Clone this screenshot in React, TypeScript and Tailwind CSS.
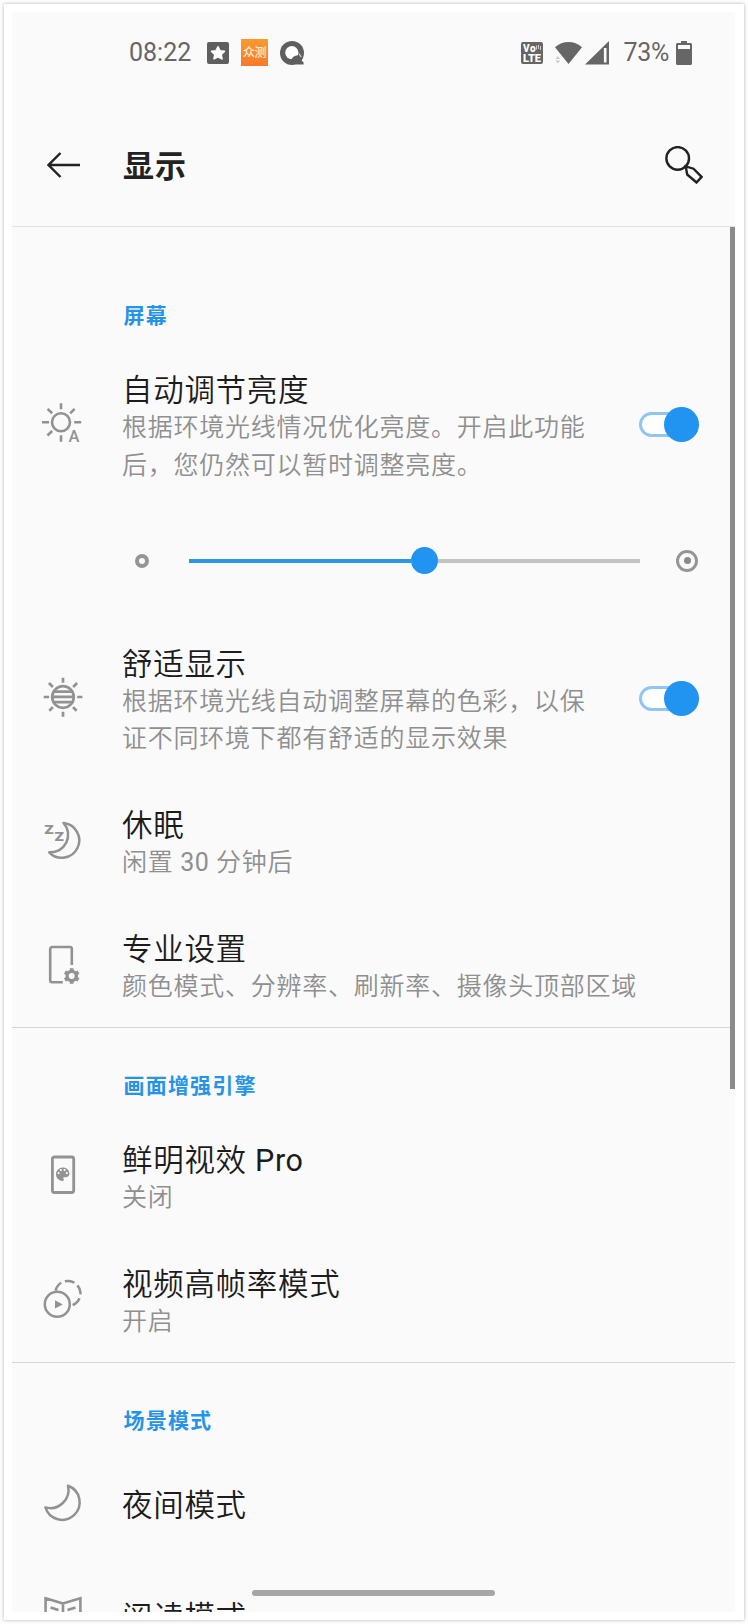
import type { ReactNode } from 'react'

const ICON = 'w-10 h-10 shrink-0 overflow-visible text-[#929292]'

function AutoBrightnessIcon() {
  return (
    <svg viewBox="0 0 40 40" className={ICON} fill="none" stroke="currentColor" strokeWidth="2.6">
      <circle cx="19" cy="17.3" r="9" />
      <path d="M19 -1.8v6M19 30.3v6.5M0 17.3h7M32.2 17.3h7M5.6 3.9l4.6 4.4M32.6 3.9l-4.4 4.4M5.4 30.5l4.8-4.5" />
      <text x="26.6" y="37.3" fontSize="16.5" fontWeight="500" fill="currentColor" stroke="none" fontFamily="Roboto">
        A
      </text>
    </svg>
  )
}

function ComfortIcon() {
  return (
    <svg viewBox="0 0 40 40" className={ICON} fill="none" stroke="currentColor" strokeWidth="2.7">
      <circle cx="21" cy="19" r="10.8" />
      <path d="M21 -.3v5M21 33.7v5M1.7 19h5.4M35.2 19h5.2M6.9 5.1l4 3.8M35.1 5.1l-4 3.8M7.3 32.7l3.6-3.6M34.6 32.700L31 29.100" />
      <path d="M11.5 13.7h19M10 18.9h22M11.5 24.1h19" />
    </svg>
  )
}

function SleepIcon() {
  return (
    <svg viewBox="0 0 40 40" className={ICON} fill="none" stroke="currentColor" strokeWidth="2.5" strokeLinejoin="round">
      <path d="M21.5 2A17.4 17.4 0 1 1 7.2 31.3A17.5 17.5 0 0 0 21.5 2z" />
      <g fill="currentColor" stroke="none" fontFamily="Roboto" fontWeight="900" fontSize="13">
        <text x="2.2" y="12.6" textLength="9.4" lengthAdjust="spacingAndGlyphs">Z</text>
        <text x="12.6" y="20" textLength="9.4" lengthAdjust="spacingAndGlyphs">Z</text>
      </g>
    </svg>
  )
}

function ProSettingsIcon() {
  return (
    <svg viewBox="0 0 40 40" className={ICON} fill="none" stroke="currentColor" strokeWidth="2.6">
      <path d="M29.8 20V4a2 2 0 0 0-2-2H10.2a2 2 0 0 0-2 2v31.2a2 2 0 0 0 2 2h10.6" />
      <circle cx="29.7" cy="31" r="4.6" strokeWidth="3.2" />
      <path
        d="M29.7 27V23.2M29.7 35v3.8M26.2 29l-3.3-1.9M33.2 33l3.3 1.9M26.2 33l-3.3 1.9M33.2 29l3.3-1.9"
        strokeWidth="3.8"
      />
    </svg>
  )
}

function ColorPhoneIcon() {
  return (
    <svg viewBox="0 0 40 40" className={ICON} fill="none" stroke="currentColor" strokeWidth="2.8">
      <rect x="10.4" y="1" width="21.3" height="35.5" rx="2" />
      <path
        transform="translate(11.7 9.2) scale(.75)"
        fill="currentColor"
        stroke="none"
        fillRule="evenodd"
        d="M12 3a9 9 0 0 0 0 18c.83 0 1.5-.67 1.5-1.5 0-.39-.15-.74-.39-1.01-.23-.26-.38-.61-.38-.99 0-.83.67-1.5 1.5-1.5H16c2.76 0 5-2.24 5-5 0-4.42-4.03-8-9-8zM6.5 12a1.5 1.5 0 1 1 0-3 1.5 1.5 0 0 1 0 3zm3-4a1.5 1.5 0 1 1 0-3 1.5 1.5 0 0 1 0 3zm5 0a1.5 1.5 0 1 1 0-3 1.5 1.5 0 0 1 0 3zm3 4a1.5 1.5 0 1 1 0-3 1.5 1.5 0 0 1 0 3z"
      />
    </svg>
  )
}

function VideoIcon() {
  return (
    <svg viewBox="0 0 40 40" className={ICON} fill="none" stroke="currentColor" strokeWidth="2.5">
      <circle cx="15.3" cy="24.2" r="12.5" />
      <path d="M13.6 10.6A12.6 12.6 0 1 1 29.4 25.6" strokeDasharray="9.8 4" />
      <path d="M13 20.2v8.4l7.8-4.2z" fill="currentColor" stroke="none" />
    </svg>
  )
}

function MoonIcon() {
  return (
    <svg viewBox="0 0 40 40" className={ICON} fill="none" stroke="currentColor" strokeWidth="2.5" strokeLinejoin="round">
      <path d="M26 .8A17.5 17.5 0 1 1 3.4 22.4A18.2 18.2 0 0 0 26 .8z" />
    </svg>
  )
}

function BookIcon() {
  return (
    <svg viewBox="0 0 40 40" className={ICON} fill="none" stroke="currentColor" strokeWidth="2.6">
      <path d="M21 6.5L3.6 1.300v29L21 35.500l17.4-5V1.300zM21 6.500v29M8.5 10.500l8 2.500M33.500 10.500l-8 2.500" />
    </svg>
  )
}

function Toggle() {
  return (
    <div className="flex h-[35px] w-[60px] shrink-0 items-center justify-between rounded-full">
      <div className="h-[25px] w-11 rounded-full border-3 border-[#8fc5f2] bg-white" />
      <div className="-ml-5 h-[35px] w-[35px] shrink-0 rounded-full bg-[#2094f0]" />
    </div>
  )
}

type RowProps = {
  icon: ReactNode
  title: ReactNode
  lines?: ReactNode[]
  toggle?: boolean
}

function Row({ icon, title, lines = [], toggle }: RowProps) {
  return (
    <div className="flex items-center pr-9 pl-[30px]">
      {icon}
      <div className={`ml-10 flex-1 ${lines.length ? 'pt-7 pb-[21.5px]' : 'py-[37.5px]'}`}>
        <h3 className="text-[30.5px] leading-[37px] font-[350] tracking-[0.7px] text-[#1c1c1c]">{title}</h3>
        {lines.map((line, i) => (
          <p key={i} className="text-[25px] leading-[37.5px] font-[350] tracking-[0.75px] whitespace-nowrap text-[#8f8f8f]">
            {line}
          </p>
        ))}
      </div>
      {toggle && <Toggle />}
    </div>
  )
}

function SectionLabel({ children }: { children: ReactNode }) {
  return (
    <h2 className="flex h-[86px] items-end pb-[11px] pl-[111.5px] text-[21px] leading-[34px] font-bold tracking-[1.2px] text-[#2594e8]">
      {children}
    </h2>
  )
}

function StatusBar() {
  return (
    <div className="flex h-[81px] shrink-0 items-center justify-between pr-[43px] pl-[116px] text-[25px] text-[#666]">
      <div className="flex items-center">
        <span className="w-[79px] pt-px pl-px font-[Roboto]">08:22</span>
        <svg viewBox="0 0 22 22" className="h-[22px] w-[22px]">
          <rect width="22" height="22" rx="2" fill="#5f5f5f" />
          <path
            d="M11 4.8l2 4 4.4.6-3.2 3.1.8 4.4-4-2.1-4 2.1.8-4.4-3.2-3.1 4.4-.6z"
            fill="#fff"
            stroke="#fff"
            strokeWidth="1.6"
            strokeLinejoin="round"
          />
        </svg>
        <div className="ml-3 flex h-[27px] w-[27px] items-center justify-center bg-linear-to-b from-[#f99a2e] to-[#f47b2c] text-[12px] tracking-[-0.5px] text-white">
          众测
        </div>
        <svg viewBox="0 0 24 24" className="ml-3 h-6 w-6">
          <circle cx="12" cy="12" r="12" fill="#5f5f5f" />
          <circle cx="11.8" cy="11.6" r="6.6" fill="#fff" />
          <path d="M11 21c0-4 3-6.6 6.5-6.6 2 0 3.8.8 5 2.4L21.6 19.5l2 2v2H17z" fill="#5f5f5f" />
          <path d="M19 12.5l2.2 3.6" stroke="#fafafa" strokeWidth="1" />
        </svg>
      </div>
      <div className="flex items-center">
        <svg viewBox="0 0 22 22" className="h-[22px] w-[22px]">
          <rect width="22" height="22" rx="2" fill="#666" />
          <g fill="#fff" fontFamily="Roboto" fontWeight="900">
            <text x="2" y="9.8" fontSize="10" textLength="12.5">Vo</text>
            <text x="2" y="20" fontSize="11" textLength="18">LTE</text>
          </g>
          <path d="M15.5 3.5v4M17.5 3v4M19.5 4v4" stroke="#ddd" strokeWidth=".9" />
        </svg>
        <svg viewBox="0 0 27 22" className="ml-3 h-[22px] w-[27px]">
          <path d="M0 5.2C7.5-1.7 19.5-1.7 27 5.2L13.5 22z" fill="#666" />
          <path d="M.5 17l2.3-3 2.3 3zM.5 18.5l2.3 3 2.3-3z" fill="#c8c8c8" />
        </svg>
        <svg viewBox="0 0 24 24" className="ml-[3px] h-6 w-6">
          <path d="M24 0v23.5H0z" fill="#666" />
          <path d="M20.2 7v14.5" stroke="#fafafa" strokeWidth="2.6" />
        </svg>
        <span className="ml-[14px] pt-px font-[Roboto] tracking-[-0.3px]">73%</span>
        <svg viewBox="0 0 16 24" className="ml-[7px] h-6 w-4">
          <path d="M5 0h6v2h3.5a1.5 1.5 0 0 1 1.5 1.5v19a1.5 1.5 0 0 1-1.5 1.5h-13A1.5 1.5 0 0 1 0 22.5v-19A1.5 1.5 0 0 1 1.5 2H5z" fill="#666" />
          <path d="M2 4h12v4H2z" fill="#fafafa" />
        </svg>
      </div>
    </div>
  )
}

function AppBar() {
  return (
    <header className="flex h-[134px] shrink-0 items-center border-b border-[#e2e2e2] pt-[11px] pr-8 pl-[35px] text-[#222]">
      <svg viewBox="0 0 34 26" className="h-[26px] w-[34px]" fill="none" stroke="currentColor" strokeWidth="2.4">
        <path d="M33 13H1.5M13.5 1L1.5 13l12 12" />
      </svg>
      <h1 className="ml-[42px] flex-1 pt-[3px] text-[31px] leading-10 font-bold tracking-[1px]">显示</h1>
      <svg viewBox="0 0 38 38" className="h-[38px] w-[38px]" fill="none" stroke="currentColor" strokeWidth="2.4">
        <circle cx="12.7" cy="12.4" r="11.3" />
        <path d="M20.7 20.4l1.5 8.1 9.3 8L36.6 30.9 28.5 22.7l-7.8-2.3z" />
      </svg>
    </header>
  )
}

function BrightnessSlider() {
  return (
    <div className="flex h-[112px] items-center pr-[37px] pb-0.5 pl-[123px]">
      <div className="h-[14px] w-[14px] rounded-full border-4 border-[#959595]" />
      <div className="ml-10 flex flex-1 items-center">
        <div className="h-1 w-[222px] bg-[#2b97e8]" />
        <div className="h-[27px] w-[27px] shrink-0 rounded-full bg-[#2094f0]" />
        <div className="h-1 flex-1 bg-[#c3c3c3]" />
      </div>
      <div className="ml-9 flex h-[22px] w-[22px] items-center justify-center rounded-full border-3 border-[#959595]">
        <div className="h-[7px] w-[7px] rounded-full bg-[#8a8a8a]" />
      </div>
    </div>
  )
}

export default function App() {
  return (
    <div className="h-[1624px] w-[748px] bg-[#fcfcfc] p-1 font-[Roboto,'Noto_Sans_CJK_SC',sans-serif]">
      <div className="h-full bg-white p-2 pr-[9px] shadow-[0_0_3px_rgba(0,0,0,0.3)]">
        <div className="relative flex h-full flex-col overflow-hidden bg-[#fafafa]">
          <StatusBar />
          <AppBar />

          <main className="min-h-0 flex-1 overflow-hidden">
            <section className="border-b border-[#d6d6d6] pt-[31px]">
              <SectionLabel>屏幕</SectionLabel>
              <Row
                icon={<AutoBrightnessIcon />}
                title="自动调节亮度"
                lines={['根据环境光线情况优化亮度。开启此功能', '后，您仍然可以暂时调整亮度。']}
                toggle
              />
              <BrightnessSlider />
              <Row
                icon={<ComfortIcon />}
                title="舒适显示"
                lines={['根据环境光线自动调整屏幕的色彩，以保', '证不同环境下都有舒适的显示效果']}
                toggle
              />
              <Row
                icon={<SleepIcon />}
                title="休眠"
                lines={[<>闲置 <span className="font-normal tracking-[0.3px]">30</span> 分钟后</>]}
              />
              <Row icon={<ProSettingsIcon />} title="专业设置" lines={['颜色模式、分辨率、刷新率、摄像头顶部区域']} />
            </section>

            <section className="border-b border-[#d6d6d6]">
              <SectionLabel>画面增强引擎</SectionLabel>
              <Row
                icon={<ColorPhoneIcon />}
                title={<>鲜明视效 <span className="font-normal">Pro</span></>}
                lines={['关闭']}
              />
              <Row icon={<VideoIcon />} title="视频高帧率模式" lines={['开启']} />
            </section>

            <section>
              <SectionLabel>场景模式</SectionLabel>
              <Row icon={<MoonIcon />} title="夜间模式" />
              <Row icon={<BookIcon />} title="阅读模式" />
            </section>
          </main>

          <div className="absolute top-[215px] right-0 h-[862px] w-[5px] bg-[#8b8b8b]" />
          <div className="absolute bottom-4 left-60 h-1.5 w-[243px] rounded-full bg-[#a6a6a6]" />
        </div>
      </div>
    </div>
  )
}
